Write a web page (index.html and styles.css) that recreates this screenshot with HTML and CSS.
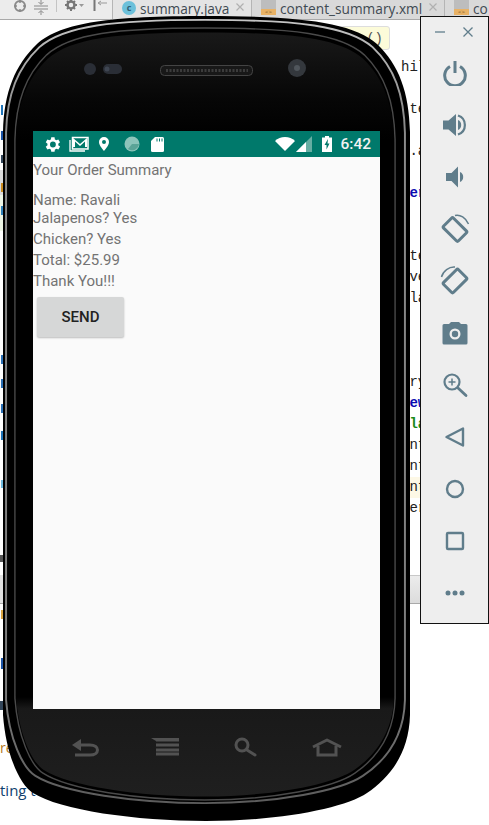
FILE: index.html
```html
<!DOCTYPE html>
<html lang="en">
<head>
    <meta charset="UTF-8">
    <meta name="viewport" content="width=device-width, initial-scale=1.0">
    <title>Emulator - Order Summary</title>
    <link rel="stylesheet" href="styles.css">
</head>
<body>

    <!-- IDE window behind the emulator -->
    <div id="ide">
        <div id="ide-top">
            <div id="ide-tools">
                <svg class="tool-icon" width="16" height="16" viewBox="0 0 16 16"><circle cx="8" cy="6" r="5" fill="none" stroke="#8a8a8a" stroke-width="2"/><path d="M8 0v3M8 9v3M2 6h3M11 6h3" stroke="#8a8a8a" stroke-width="1.5"/></svg>
                <svg class="tool-icon" width="16" height="16" viewBox="0 0 16 16"><path d="M1 6h14M1 9h14" stroke="#8a8a8a"/><path d="M8 0v4M5.5 2 8 4.500 10.500 2M8 15v-4M5.500 13 8 10.500 10.500 13" fill="none" stroke="#8a8a8a"/></svg>
                <span class="tool-sep"></span>
                <svg class="tool-icon" width="20" height="16" viewBox="0 0 20 16"><circle cx="6" cy="5" r="3.500" fill="none" stroke="#777" stroke-width="2.500"/><path d="M6 -1v3M6 8v3M0 5h3M9 5h3M2 1l2 2M8 7l2 2M10 1 8 3M4 7 2 9" stroke="#777" stroke-width="2"/><path d="M14 4h5l-2.500 3z" fill="#999"/></svg>
                <svg class="tool-icon tool-pin" width="14" height="16" viewBox="0 0 14 16"><path d="M1.500 0v11" stroke="#777" stroke-width="2"/><path d="M14 3H6M8 1 5 3l3 2" fill="none" stroke="#999"/></svg>
            </div>
            <div class="tab tab-active">
                <span class="tab-badge">c</span>
                <span class="tab-name">summary.java</span>
                <svg class="tab-close" width="8" height="8" viewBox="0 0 8 8"><path d="M.5.500l7 7M7.500.500l-7 7" stroke="#b0b0b0" stroke-width="1.200"/></svg>
            </div>
            <div class="tab">
                <span class="xml-badge">&lt;&gt;</span>
                <span class="tab-name">content_summary.xml</span>
                <svg class="tab-close" width="8" height="8" viewBox="0 0 8 8"><path d="M.5.500l7 7M7.500.500l-7 7" stroke="#b0b0b0" stroke-width="1.200"/></svg>
            </div>
            <div class="tab">
                <span class="xml-badge">&lt;&gt;</span>
                <span class="tab-name">co</span>
            </div>
        </div>

        <div id="hint">()</div>

        <div id="code">
            <div class="code-line">hil</div>
            <div class="code-line"></div>
            <div class="code-line"> te</div>
            <div class="code-line"></div>
            <div class="code-line"> .a</div>
            <div class="code-line"></div>
            <div class="code-line kw"> er</div>
            <div class="code-line"></div>
            <div class="code-line"></div>
            <div class="code-line"> te</div>
            <div class="code-line"> ve</div>
            <div class="code-line"> la</div>
            <div class="code-line"></div>
            <div class="code-line"></div>
            <div class="code-line"></div>
            <div class="code-line"> ry</div>
            <div class="code-line kw"> ew</div>
            <div class="code-line str"> la</div>
            <div class="code-line"> nt</div>
            <div class="code-line"> nt</div>
            <div class="code-line caret"> nt</div>
            <div class="code-line"> er</div>
        </div>

        <div id="bottom-band"></div>
        <span id="log-warn">re</span>
        <span id="log-line">ting t</span>

        <svg id="left-ticks" width="4" height="825" viewBox="0 0 4 825">
            <rect x="0" y="170" width="4" height="25" fill="#dcdcdc"/>
            <rect x="0" y="195" width="4" height="36" fill="#eef6e6"/>
            <rect x="1" y="105" width="2" height="10" fill="#1f74b8"/>
            <rect x="1" y="131" width="2" height="9" fill="#1c55a8"/>
            <rect x="1" y="155" width="2" height="8" fill="#33465a"/>
            <rect x="1" y="183" width="2" height="9" fill="#c98a1e"/>
            <rect x="1" y="206" width="2" height="9" fill="#2f7fb8"/>
            <rect x="1" y="355" width="2" height="9" fill="#2a6fb5"/>
            <rect x="1" y="379" width="2" height="9" fill="#2a6fb5"/>
            <rect x="1" y="404" width="2" height="9" fill="#2a6fb5"/>
            <rect x="1" y="431" width="2" height="9" fill="#1f74b8"/>
            <rect x="1" y="480" width="2" height="8" fill="#6fbadf"/>
            <rect x="0" y="555" width="4" height="7" fill="#555"/>
            <rect x="0" y="575" width="4" height="28" fill="#e2e2e2"/>
            <rect x="1" y="610" width="2" height="9" fill="#d9a441"/>
            <rect x="1" y="658" width="2" height="11" fill="#1c55a8"/>
            <rect x="0" y="701" width="4" height="9" fill="#33465a"/>
        </svg>
    </div>

    <!-- Device frame -->
    <div id="phone">
        <svg id="phone-shell" width="489" height="825" viewBox="0 0 489 825">
            <defs>
                <path id="body" d="M206 16C300 16 352 22 377 44C399 65 409 92 410 132L410 715C409 755 388 779 367 793C345 808 280 821 206 821C135 821 60 810 33 793C20 785 6 755 3 715L3 132C4 92 15 65 37 44C62 22 112 16 206 16Z"/>
                <linearGradient id="face" x1="0" y1="0" x2="0" y2="1">
                    <stop offset="0" stop-color="#191919"/>
                    <stop offset="0.09" stop-color="#060606"/>
                    <stop offset="0.14" stop-color="#000"/>
                    <stop offset="0.87" stop-color="#000"/>
                    <stop offset="0.885" stop-color="#191919"/>
                    <stop offset="1" stop-color="#1f1f1f"/>
                </linearGradient>
                <linearGradient id="rim" x1="0" y1="0" x2="0" y2="1">
                    <stop offset="0" stop-color="#c4c4c4"/>
                    <stop offset="0.12" stop-color="#8c8c8c"/>
                    <stop offset="0.85" stop-color="#7c7c7c"/>
                    <stop offset="1" stop-color="#5c5c5c"/>
                </linearGradient>
            </defs>
            <use href="#body" fill="#000"/>
            <use href="#body" transform="translate(205.500 411.500) scale(.98 .973) translate(-206.500 -418.500)" fill="none" stroke="url(#rim)" stroke-width="2"/>
            <use href="#body" transform="translate(205 414) scale(.934 .959) translate(-206.500 -418.500)" fill="none" stroke="#4a4a4a" stroke-width="1.500"/>
            <use href="#body" transform="translate(205 414.500) scale(.929 .949) translate(-206.500 -418.500)" fill="url(#face)"/>

            <circle cx="90" cy="69" r="6" fill="#2a2e36"/>
            <rect x="103" y="64" width="19" height="10" rx="5" fill="#2a2e36"/>
            <circle cx="107" cy="69" r="2.500" fill="#3f4652"/>
            <circle cx="297" cy="68" r="9" fill="#34383d"/>
            <circle cx="297" cy="68" r="3" fill="#50565c"/>
            <rect x="160.500" y="65.500" width="92" height="10" rx="4" fill="#181818" stroke="#444"/>
            <path d="M166 70.500H248" stroke="#3c3c3c" stroke-width="3" stroke-dasharray="2 1.500"/>

            <!-- hardware keys -->
            <g fill="none" stroke="#525252" stroke-width="3">
                <path d="M76 745H90C100 745 100 755 90 755H75"/>
                <path d="M156 740H179M156 745H179M156 750H179M156 754H179"/>
                <circle cx="242" cy="745" r="6"/>
                <path d="M247 750 255 755" stroke-linecap="round"/>
                <path d="M318 746V755H336V746"/>
                <path d="M313 747 327 740 341 747" stroke-linejoin="round"/>
            </g>
            <path d="M72 745 81 739V751Z" fill="#525252"/>
            <path d="M151 738H179V741H156Z" fill="#525252"/>
        </svg>

        <div id="screen">
            <div id="status-bar">
                <div id="status-left">
                    <svg width="15" height="15" viewBox="2.500 3 18 18"><path fill="#fff" d="M19.400 13a7.500 7.500 0 0 0 0-2l2.100-1.600-2-3.500-2.500 1a7.500 7.500 0 0 0-1.700-1L15 3.300h-4l-.4 2.600a7.500 7.500 0 0 0-1.700 1l-2.500-1-2 3.500L6.500 11a7.500 7.500 0 0 0 0 2l-2.100 1.600 2 3.500 2.500-1a7.500 7.500 0 0 0 1.700 1l.4 2.600h4l.4-2.600a7.500 7.500 0 0 0 1.700-1l2.500 1 2-3.500zM13 15.500a3.500 3.500 0 1 1 0-7 3.500 3.500 0 0 1 0 7z" transform="translate(-1 0)"/></svg>
                    <svg width="20" height="16" viewBox="0 0 20 16"><path d="M3.500 1.500H19V13H3.500z" fill="none" stroke="#fff" stroke-width="1.500"/><path d="M1 4V15H16" fill="none" stroke="#fff" stroke-width="1.300"/><path d="M4 2 11 8 18 2V11H16V5.500L11 10 6 5.500V11H4z" fill="#fff"/></svg>
                    <svg width="12" height="16" viewBox="0 0 12 16"><path fill-rule="evenodd" fill="#fff" d="M6 1a5 5 0 0 1 5 5c0 3.500-5 9-5 9S1 9.500 1 6a5 5 0 0 1 5-5zm0 3a2 2 0 1 0 0 4 2 2 0 0 0 0-4z"/></svg>
                    <svg class="status-sync" width="16" height="16" viewBox="0 0 16 16"><circle cx="8" cy="8" r="7.500" fill="#8cc4ba"/><path d="M4 13A7 7 0 0 0 15 8H8z" fill="#5ba497"/></svg>
                    <svg class="status-sd" width="13" height="15" viewBox="0 0 13 15"><path fill="#fff" d="M4 0H11.500A1.500 1.500 0 0 1 13 1.500V13.500A1.500 1.500 0 0 1 11.500 15H1.500A1.500 1.500 0 0 1 0 13.500V4z"/><path d="M6 1.500V4.500M8.500 1.500V4.500M11 1.500V4.500" stroke="#00796b"/></svg>
                </div>
                <div id="status-right">
                    <svg width="20" height="14" viewBox="0 0 20 14"><path fill="#fff" d="M0 4C5-1.300 15-1.300 20 4L10 14z"/></svg>
                    <svg class="signal" width="16" height="16" viewBox="0 0 16 16"><path fill="#66aea3" d="M16 0V16H0z"/><path fill="#fff" d="M10 6V16H0z"/></svg>
                    <svg class="battery" width="10" height="16" viewBox="0 0 10 16"><path fill-rule="evenodd" fill="#fff" d="M3 0H7V1.500H10V16H0V1.500H3zM6 3 2.500 9H4.500V13.500L7.500 7.500H5.500z"/></svg>
                    <span id="clock">6:42</span>
                </div>
            </div>

            <div id="summary-title">Your Order Summary</div>
            <div class="summary-name">Name: Ravali</div>
            <div class="summary-first">Jalapenos? Yes</div>
            <div class="summary-line">Chicken? Yes</div>
            <div class="summary-line">Total: $25.99</div>
            <div class="summary-line">Thank You!!!</div>
            <button id="send-btn">SEND</button>
        </div>
    </div>

    <!-- Emulator side toolbar -->
    <div id="emu-bar">
        <div id="emu-head">
            <svg width="10" height="10" viewBox="0 0 10 10"><path d="M0 5H10" stroke="#607d8b" stroke-width="1.300"/></svg>
            <svg width="10" height="10" viewBox="0 0 10 10"><path d="M.5.500l9 9M9.500.500l-9 9" stroke="#607d8b" stroke-width="1.300"/></svg>
        </div>
        <div class="emu-btn">
            <svg width="26" height="26" viewBox="0 0 26 26"><path d="M8 6.500a10.300 10.300 0 1 0 10 0" fill="none" stroke="#607d8b" stroke-width="3"/><path d="M13 1V13" stroke="#607d8b" stroke-width="3"/></svg>
        </div>
        <div class="emu-btn">
            <svg width="26" height="26" viewBox="0 0 26 26"><path d="M1 8.500H6.500L14 2V24L6.500 17.500H1z" fill="#607d8b"/><path d="M16 8a5.500 5.500 0 0 1 0 10z" fill="#607d8b"/><path d="M16 3.500a10 10 0 0 1 0 19" fill="none" stroke="#607d8b" stroke-width="2.200"/></svg>
        </div>
        <div class="emu-btn">
            <svg width="26" height="26" viewBox="0 0 26 26"><path d="M4 9H9.500L16 2.500V23.500L9.500 17H4z" fill="#607d8b"/><path d="M18 8a5.500 5.500 0 0 1 0 10z" fill="#607d8b"/></svg>
        </div>
        <div class="emu-btn">
            <svg width="30" height="30" viewBox="0 0 30 30"><rect x="8" y="5" width="14" height="21" rx="1.500" transform="rotate(-45 15 15.500)" fill="none" stroke="#607d8b" stroke-width="3"/><path d="M15 1.500C20 0 26 4 28.500 10" fill="none" stroke="#607d8b" stroke-width="1.500"/></svg>
        </div>
        <div class="emu-btn">
            <svg width="30" height="30" viewBox="0 0 30 30"><rect x="8" y="4.500" width="14" height="21" rx="1.500" transform="rotate(45 15 15)" fill="none" stroke="#607d8b" stroke-width="3"/><path d="M1.500 11C3 5 9 .500 15 1" fill="none" stroke="#607d8b" stroke-width="1.500"/></svg>
        </div>
        <div class="emu-btn">
            <svg width="26" height="26" viewBox="0 0 26 26"><path fill-rule="evenodd" fill="#607d8b" d="M9 2H17L19 4H24A1.500 1.500 0 0 1 25.500 5.500V23A1.500 1.500 0 0 1 24 24.500H2A1.500 1.500 0 0 1 .5 23V5.500A1.500 1.500 0 0 1 2 4H7zM13 8.500a5.500 5.500 0 1 0 0 11 5.500 5.500 0 0 0 0-11z"/><circle cx="13" cy="14" r="3.200" fill="#607d8b"/></svg>
        </div>
        <div class="emu-btn">
            <svg width="26" height="26" viewBox="0 0 26 26"><circle cx="10" cy="10" r="7.500" fill="none" stroke="#607d8b" stroke-width="2.200"/><path d="M16 16 24 23.500" stroke="#607d8b" stroke-width="2.800" stroke-linecap="round"/><path d="M6.500 10H13.500M10 6.500V13.500" stroke="#607d8b" stroke-width="1.500"/></svg>
        </div>
        <div class="emu-btn">
            <svg width="26" height="26" viewBox="0 0 26 26"><path d="M21 4.500V21.500L4.500 13z" fill="none" stroke="#607d8b" stroke-width="2.400" stroke-linejoin="round"/></svg>
        </div>
        <div class="emu-btn">
            <svg width="26" height="26" viewBox="0 0 26 26"><circle cx="13" cy="13" r="8" fill="none" stroke="#607d8b" stroke-width="2.400"/></svg>
        </div>
        <div class="emu-btn">
            <svg width="26" height="26" viewBox="0 0 26 26"><rect x="5" y="5" width="16" height="16" rx="1" fill="none" stroke="#607d8b" stroke-width="2.400"/></svg>
        </div>
        <div class="emu-btn">
            <svg width="26" height="26" viewBox="0 0 26 26"><circle cx="6" cy="13" r="2.500" fill="#607d8b"/><circle cx="13" cy="13" r="2.500" fill="#607d8b"/><circle cx="20" cy="13" r="2.500" fill="#607d8b"/></svg>
        </div>
    </div>

</body>
</html>
```

FILE: styles.css
```css
html, body {
    margin: 0;
    padding: 0;
    width: 489px;
    height: 825px;
    overflow: hidden;
    background-color: white;
    font-family: Roboto, "Liberation Sans", sans-serif;
}

#ide {
    position: absolute;
    left: 0;
    top: 0;
    width: 489px;
    height: 825px;
    overflow: hidden;
}

#ide-top {
    display: flex;
    height: 19px;
    background-color: #ececec;
    border-bottom: 1px solid #a9a9a9;
    overflow: hidden;
}

#ide-tools {
    display: flex;
    flex: none;
    align-items: flex-start;
    gap: 5px;
    width: 113px;
    padding-left: 12px;
    box-sizing: border-box;
    border-right: 1px solid #b5b5b5;
}

.tool-icon {
    flex: none;
}

.tool-pin {
    margin-left: 3px;
}

.tool-sep {
    flex: none;
    width: 1px;
    height: 12px;
    background-color: #c4c4c4;
    margin: 0 3px 0 2px;
}

.tab {
    display: flex;
    align-items: flex-start;
    flex: none;
    width: 193px;
    gap: 4px;
    padding-left: 9px;
    box-sizing: border-box;
    background-color: #d9d9d9;
    border-right: 1px solid #b5b5b5;
    color: #3f4a52;
    font-family: "Open Sans", sans-serif;
    font-size: 13.7px;
    line-height: 17px;
}

.tab-active {
    width: 139px;
    background-color: #e4e4e4;
}

.tab-badge {
    flex: none;
    width: 14px;
    height: 14px;
    margin-top: 1px;
    border-radius: 50%;
    background-color: #6cc0da;
    color: #2e5d74;
    font-size: 9px;
    font-weight: 700;
    line-height: 13px;
    text-align: center;
}

.xml-badge {
    flex: none;
    width: 15px;
    height: 6px;
    padding-top: 9px;
    background: linear-gradient(#bdbdbd 9px, #e8b266 9px);
    color: #6a4a1c;
    font-size: 6px;
    line-height: 6px;
    text-align: center;
}

.tab-name {
    white-space: nowrap;
}

.tab-close {
    flex: none;
    margin: 3px 0 0 3px;
}

#hint {
    position: absolute;
    left: 340px;
    top: 26px;
    width: 50px;
    height: 24px;
    padding-right: 6px;
    box-sizing: border-box;
    background-color: #fcfbd9;
    border: 1px solid #ddd;
    border-radius: 3px;
    color: #555;
    font-family: "Liberation Mono", monospace;
    font-size: 14px;
    line-height: 24px;
    text-align: right;
}

#code {
    position: absolute;
    left: 401px;
    top: 57px;
    width: 30px;
    font-family: "Liberation Mono", monospace;
    font-size: 14px;
    color: #222;
}

.code-line {
    height: 21px;
    line-height: 21px;
    white-space: pre;
}

.kw {
    color: #0a0ab0;
    font-weight: 700;
}

.str {
    color: #1a8a1a;
    font-weight: 700;
}

.caret {
    background-color: #fdf8e6;
}

#bottom-band {
    position: absolute;
    left: 0;
    top: 575px;
    width: 420px;
    height: 27px;
    background: linear-gradient(#ececec, #dcdcdc);
    border-top: 1px solid #c8c8c8;
    border-bottom: 1px solid #a9a9a9;
}

#log-warn {
    position: absolute;
    left: 0;
    top: 738px;
    color: #b5791a;
    font-family: "Open Sans", sans-serif;
    font-size: 14px;
}

#log-line {
    position: absolute;
    left: 0;
    top: 780px;
    color: #0f3f6e;
    font-family: "Open Sans", sans-serif;
    font-size: 15px;
}

#left-ticks {
    position: absolute;
    left: 0;
    top: 0;
}

#phone {
    position: absolute;
    left: 0;
    top: 0;
    width: 420px;
    height: 825px;
}

#phone-shell {
    position: absolute;
    left: 0;
    top: 0;
}

#screen {
    position: absolute;
    left: 33px;
    top: 131px;
    width: 347px;
    height: 578px;
    background-color: #fafafa;
    color: #737373;
    font-size: 15px;
}

#status-bar {
    display: flex;
    justify-content: space-between;
    align-items: center;
    height: 26px;
    padding: 0 9px 0 12px;
    background-color: #00796b;
}

#status-left {
    display: flex;
    align-items: center;
    gap: 9px;
}

.status-sync {
    margin-left: 5px;
}

.status-sd {
    margin-left: 2px;
}

#status-right {
    display: flex;
    align-items: center;
    gap: 1px;
}

.signal {
    margin-right: 9px;
}

.battery {
    margin-right: 7px;
}

#clock {
    color: #f2f2f2;
    font-size: 15.5px;
    font-weight: 500;
}

#summary-title {
    height: 21px;
    line-height: 26px;
    margin-bottom: 13px;
}

.summary-name {
    height: 18px;
    line-height: 19px;
}

.summary-first {
    height: 20px;
    line-height: 19px;
}

.summary-line {
    height: 21px;
    line-height: 21px;
}

#send-btn {
    display: block;
    width: 87px;
    height: 40px;
    margin: 5px 0 0 4px;
    padding: 0;
    background-color: #d6d7d7;
    border: none;
    border-radius: 2px;
    box-shadow: 0 1px 2px rgba(0, 0, 0, 0.25);
    color: #222;
    font-family: Roboto, sans-serif;
    font-size: 15px;
    font-weight: 500;
}

#emu-bar {
    position: absolute;
    left: 420px;
    top: 16px;
    width: 69px;
    height: 608px;
    box-sizing: border-box;
    background-color: #eeeeee;
    border: 1px solid #111;
}

#emu-head {
    display: flex;
    justify-content: space-between;
    align-items: center;
    height: 30px;
    padding: 0 15px 0 14px;
}

.emu-btn {
    display: flex;
    justify-content: center;
    align-items: center;
    height: 52px;
}
```
